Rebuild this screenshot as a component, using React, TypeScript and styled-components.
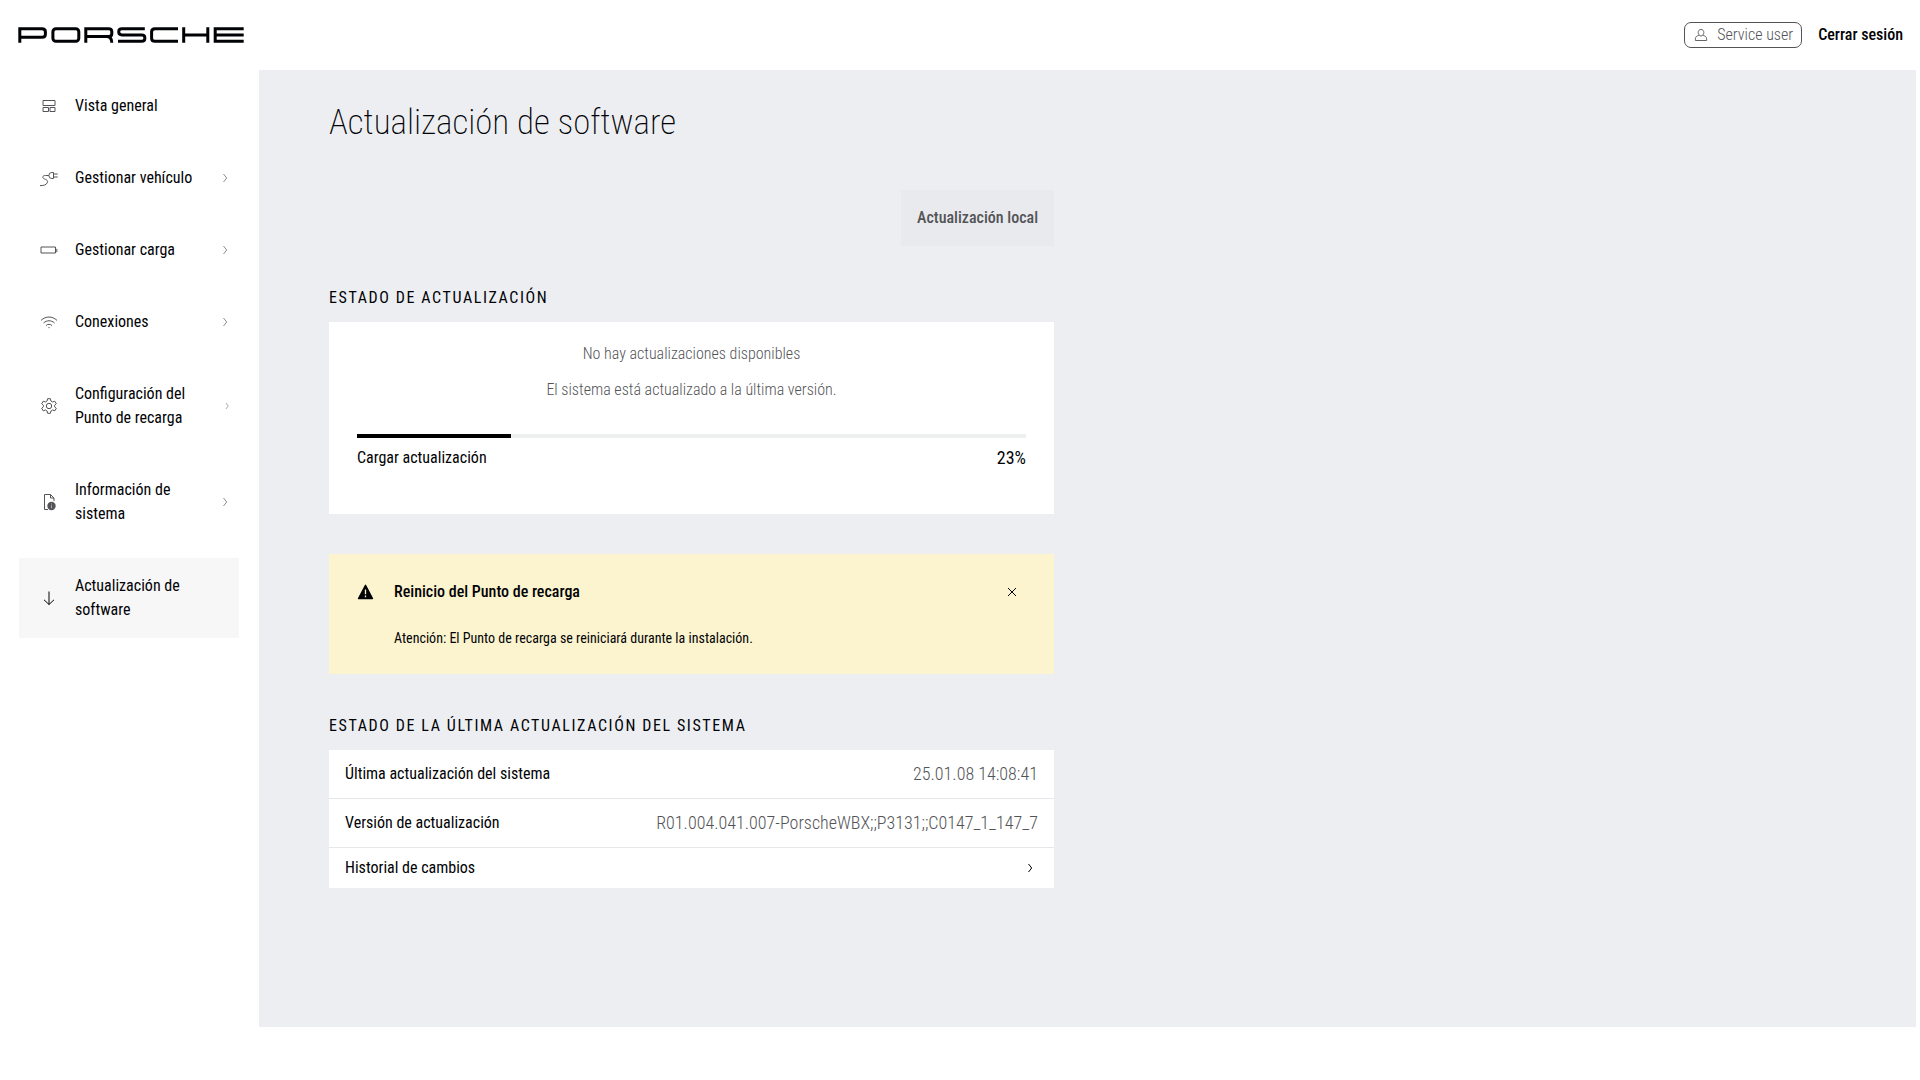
import React, { useState } from 'react';
import styled, { createGlobalStyle, css } from 'styled-components';

const color = {
  ink: '#010205',
  muted: '#535457',
  faint: '#8c8d90',
  canvas: '#edeef2',
  surface: '#ffffff',
  active: '#f7f7f7',
  disabled: '#e9eaed',
  line: '#e6e7ea',
  track: '#eeefef',
  warning: '#fcf4cf',
};

const GlobalStyle = createGlobalStyle`
  *, *::before, *::after { box-sizing: border-box; }
  body {
    margin: 0;
    background: ${color.surface};
    color: ${color.ink};
    font-family: 'Roboto Condensed', Roboto, 'Liberation Sans', sans-serif;
    font-size: 16px;
    font-weight: 380;
    line-height: 24px;
  }
  h1, h2, h3, p, dl, dd, ul { margin: 0; padding: 0; }
  button { font: inherit; color: inherit; border: 0; background: none; padding: 0; cursor: pointer; }
  a { color: inherit; text-decoration: none; }
  svg { display: block; flex: none; fill: none; stroke: currentColor; }
`;

const Shell = styled.div`
  display: grid;
  grid-template-columns: 259px minmax(0, 1fr);
  grid-template-rows: 70px 1fr;
  min-height: 100vh;
  padding: 0 4px 53px 0;
`;

const Header = styled.header`
  grid-column: 1 / -1;
  display: flex;
  align-items: center;
  justify-content: space-between;
  padding: 0 13px 0 18px;
`;

const Account = styled.div`
  display: flex;
  align-items: center;
  gap: 16px;
`;

const UserBadge = styled.button`
  display: flex;
  align-items: center;
  gap: 8px;
  height: 26px;
  padding: 0 8px;
  border: 1px solid ${color.muted};
  border-radius: 7px;
  color: ${color.muted};
  font-weight: 350;
`;

const LogoutLink = styled.a`
  font-weight: 550;
`;

const Sidebar = styled.nav`
  padding: 8px 20px 0 19px;
`;

const NavList = styled.ul`
  display: flex;
  flex-direction: column;
  gap: 16px;
  list-style: none;
`;

const NavLink = styled.a<{ $active?: boolean }>`
  display: flex;
  align-items: center;
  padding: 16px 6px 16px 20px;
  ${({ $active }) => $active && css`background: ${color.active};`}
`;

const NavIcon = styled.span<{ $strong?: boolean }>`
  display: flex;
  margin-right: 16px;
  color: ${({ $strong }) => ($strong ? color.ink : color.muted)};
`;

const NavLabel = styled.span`
  flex: 1;
  margin-right: 8px;
`;

const NavArrow = styled.span`
  display: flex;
  color: ${color.faint};
`;

const Main = styled.main`
  background: ${color.canvas};
  padding: 32px 70px;
`;

const Column = styled.div`
  display: flex;
  flex-direction: column;
  max-width: 725px;
`;

const Title = styled.h1`
  font-size: 35px;
  line-height: 42px;
  font-weight: 200;
`;

const Actions = styled.div`
  display: flex;
  justify-content: flex-end;
  margin: 46px 0 40px;
`;

const LocalUpdateButton = styled.button`
  padding: 16px;
  background: ${color.disabled};
  color: ${color.muted};
  font-weight: 550;
`;

const SectionTitle = styled.h2`
  margin-bottom: 12px;
  font-size: 16px;
  line-height: 24px;
  font-weight: 380;
  letter-spacing: 0.1em;
  text-transform: uppercase;
`;

const Card = styled.section`
  background: ${color.surface};
`;

const StatusCard = styled(Card)`
  display: flex;
  flex-direction: column;
  gap: 12px;
  padding: 20px 28px 44px;
  margin-bottom: 40px;
`;

const StatusText = styled.p`
  text-align: center;
  color: ${color.muted};
  font-weight: 350;
`;

const Progress = styled.div`
  display: flex;
  flex-direction: column;
  gap: 8px;
  margin-top: 20px;
`;

const Track = styled.div`
  height: 4px;
  background: ${color.track};
`;

const Fill = styled.div`
  height: 100%;
  background: #000000;
`;

const ProgressCaption = styled.div`
  display: flex;
  justify-content: space-between;
`;

const ProgressValue = styled.span`
  font-size: 18px;
`;

const Notice = styled.section`
  display: grid;
  grid-template-columns: 17px 1fr 32px;
  column-gap: 20px;
  row-gap: 24px;
  align-items: center;
  padding: 26px 26px 26px 28px;
  margin-bottom: 40px;
  background: ${color.warning};
`;

const NoticeTitle = styled.h3`
  font-size: 16px;
  line-height: 24px;
  font-weight: 550;
`;

const NoticeText = styled.p`
  grid-column: 2;
  font-size: 14px;
  line-height: 20px;
`;

const CloseButton = styled.button`
  display: flex;
  align-items: center;
  justify-content: center;
  height: 24px;
`;

const DataRow = styled.div`
  display: flex;
  align-items: center;
  justify-content: space-between;
  padding: 12px 16px;
  border-bottom: 1px solid ${color.line};
`;

const DataValue = styled.dd`
  font-size: 18px;
  font-weight: 300;
  color: ${color.muted};
`;

const ChangelogButton = styled.button`
  display: flex;
  align-items: center;
  justify-content: space-between;
  width: 100%;
  padding: 8px 16px;
  text-align: left;
`;

const Wordmark = () => (
  <svg width="226" height="16" viewBox="0 0 226 16" role="img" aria-label="Porsche" strokeWidth="3">
    <path d="M1.8 15.8V1.8H24q3.4 0 3.4 3v2.4q0 3-3.4 3H1.8" />
    <rect x="34.9" y="1.8" width="25.9" height="12.4" rx="3" />
    <path d="M67.8 15.8v-14h22.6q3.4 0 3.4 2.8v2.2q0 2.8-3.4 2.8H67.8M88.5 9.6q5.3 0 5.3 6.2" />
    <path d="M126.8 1.8H104q-3.2 0-3.2 2.5v1q0 2.6 3.2 2.6h19.6q3.2 0 3.2 2.6v1.2q0 2.5-3.2 2.5H100" />
    <path d="M160 1.8h-23q-3.4 0-3.4 3v6.4q0 3 3.4 3h23" />
    <path d="M165.7.3v15.4M189.8.3v15.4M165.7 8h24.1" />
    <path d="M225.7 1.8h-28.5v12.4h28.5M197.2 8h28.5" />
  </svg>
);

const Chevron = ({ size = 16 }: { size?: number }) => (
  <svg width={size} height={size} viewBox="0 0 16 16" strokeWidth="1" aria-hidden="true">
    <path d="M6.500 4 9.700 8l-3.200 4" />
  </svg>
);

const iconProps = { width: 20, height: 20, viewBox: '0 0 20 20', strokeWidth: 1, 'aria-hidden': true } as const;

const icons = {
  overview: (
    <svg {...iconProps}>
      <path d="M4 4.500h12v5H4zM4 11.500h5.500v4H4zM11 11.500h5v4h-5z" />
    </svg>
  ),
  vehicle: (
    <svg {...iconProps}>
      <path d="M14.500 4.500h-1.700a3 3 0 0 0 0 6h1.700zM14.500 6h4.200M14.500 9h4.200M9.800 7.500H6.500c-3.600 0-3.300 2.600-1 3.500 2.300.9 3.900 1.500 2.600 4C7.200 17.100 4 17.700 1 17.600" />
    </svg>
  ),
  battery: (
    <svg {...iconProps}>
      <path d="M2 7h14.500v6H2zM17.800 8.800v3.400" />
    </svg>
  ),
  wifi: (
    <svg {...iconProps}>
      <path d="M2 8.400c4.800-4.500 11.200-4.500 16 0M4.500 11c3.300-3 7.700-3 11 0M7 13.500c1.800-1.600 4.200-1.600 6 0" />
      <circle cx="10" cy="15.600" r=".7" fill="currentColor" stroke="none" />
    </svg>
  ),
  settings: (
    <svg {...iconProps}>
      <circle cx="10" cy="10" r="2.700" />
      <path d="M8.600 2.700h2.800l.5 2.300 1.700 1 2.200-.8 1.500 2.500-1.700 1.500v1.600l1.700 1.500-1.500 2.500-2.200-.8-1.700 1-.5 2.300H8.600L8.100 15l-1.700-1-2.200.8-1.500-2.500 1.700-1.500V9.200L2.700 7.700l1.500-2.500 2.200.8 1.700-1z" strokeLinejoin="round" />
    </svg>
  ),
  info: (
    <svg {...iconProps}>
      <path d="M9 17.500H5.500v-15h6l3.500 3.500v3M11.500 2.500V6H15" />
      <circle cx="12.500" cy="14" r="4.200" fill="currentColor" stroke="none" />
      <path d="M12.500 11.500v1M12.500 13.300v3" stroke="#a9a9ab" />
    </svg>
  ),
  download: (
    <svg {...iconProps}>
      <path d="M10 3.500v13M5 11.800l5 4.700 5-4.700" />
    </svg>
  ),
};

const UserIcon = () => (
  <svg width="16" height="16" viewBox="0 0 16 16" strokeWidth="0.9" aria-hidden="true">
    <path d="M8 2.500c-1.900 0-2.800 1.300-2.800 3S6.400 9 8 9s2.800-1.800 2.800-3.500-.9-3-2.800-3zM5.800 8.400C3.600 9 2.400 10 2.400 11.500v2h11.200v-2c0-1.500-1.200-2.500-3.400-3.100" />
  </svg>
);

const WarningIcon = () => (
  <svg width="17" height="16" viewBox="0 0 17 16" aria-hidden="true">
    <path d="M8.500 1.300 15.500 14.500h-14z" fill="currentColor" strokeWidth="1.400" strokeLinejoin="round" />
    <path d="M8.500 5.500v4.800M8.500 11.600v1.600" stroke={color.warning} strokeWidth="1.300" />
  </svg>
);

const CloseIcon = () => (
  <svg width="10" height="10" viewBox="0 0 10 10" strokeWidth="1" aria-hidden="true">
    <path d="M1 1l8 8M9 1 1 9" />
  </svg>
);

type NavEntry = { icon: keyof typeof icons; label: string; arrow?: number; active?: boolean };

const navigation: NavEntry[] = [
  { icon: 'overview', label: 'Vista general' },
  { icon: 'vehicle', label: 'Gestionar vehículo', arrow: 16 },
  { icon: 'battery', label: 'Gestionar carga', arrow: 16 },
  { icon: 'wifi', label: 'Conexiones', arrow: 16 },
  { icon: 'settings', label: 'Configuración del Punto de recarga', arrow: 12 },
  { icon: 'info', label: 'Información de sistema', arrow: 16 },
  { icon: 'download', label: 'Actualización de software', active: true },
];

export default function App() {
  const [noticeOpen, setNoticeOpen] = useState(true);
  const progress = 23;

  return (
    <>
      <GlobalStyle />
      <Shell>
        <Header>
          <Wordmark />
          <Account>
            <UserBadge type="button">
              <UserIcon />
              Service user
            </UserBadge>
            <LogoutLink href="#logout">Cerrar sesión</LogoutLink>
          </Account>
        </Header>
        <Sidebar>
          <NavList>
            {navigation.map(({ icon, label, arrow, active }) => (
              <li key={label}>
                <NavLink href={`#${icon}`} $active={active} aria-current={active ? 'page' : undefined}>
                  <NavIcon $strong={active}>{icons[icon]}</NavIcon>
                  <NavLabel>{label}</NavLabel>
                  {arrow && (
                    <NavArrow>
                      <Chevron size={arrow} />
                    </NavArrow>
                  )}
                </NavLink>
              </li>
            ))}
          </NavList>
        </Sidebar>
        <Main>
          <Column>
            <Title>Actualización de software</Title>
            <Actions>
              <LocalUpdateButton type="button">Actualización local</LocalUpdateButton>
            </Actions>

            <SectionTitle>Estado de actualización</SectionTitle>
            <StatusCard>
              <StatusText>No hay actualizaciones disponibles</StatusText>
              <StatusText>El sistema está actualizado a la última versión.</StatusText>
              <Progress>
                <Track
                  role="progressbar"
                  aria-label="Cargar actualización"
                  aria-valuemin={0}
                  aria-valuemax={100}
                  aria-valuenow={progress}
                >
                  <Fill style={{ width: `${progress}%` }} />
                </Track>
                <ProgressCaption>
                  <span>Cargar actualización</span>
                  <ProgressValue>{progress}%</ProgressValue>
                </ProgressCaption>
              </Progress>
            </StatusCard>

            {noticeOpen && (
              <Notice>
                <WarningIcon />
                <NoticeTitle>Reinicio del Punto de recarga</NoticeTitle>
                <CloseButton type="button" aria-label="Cerrar" onClick={() => setNoticeOpen(false)}>
                  <CloseIcon />
                </CloseButton>
                <NoticeText>Atención: El Punto de recarga se reiniciará durante la instalación.</NoticeText>
              </Notice>
            )}

            <SectionTitle>Estado de la última actualización del sistema</SectionTitle>
            <Card>
              <dl>
                <DataRow>
                  <dt>Última actualización del sistema</dt>
                  <DataValue>25.01.08 14:08:41</DataValue>
                </DataRow>
                <DataRow>
                  <dt>Versión de actualización</dt>
                  <DataValue>R01.004.041.007-PorscheWBX;;P3131;;C0147_1_147_7</DataValue>
                </DataRow>
              </dl>
              <ChangelogButton type="button">
                Historial de cambios
                <Chevron />
              </ChangelogButton>
            </Card>
          </Column>
        </Main>
      </Shell>
    </>
  );
}
